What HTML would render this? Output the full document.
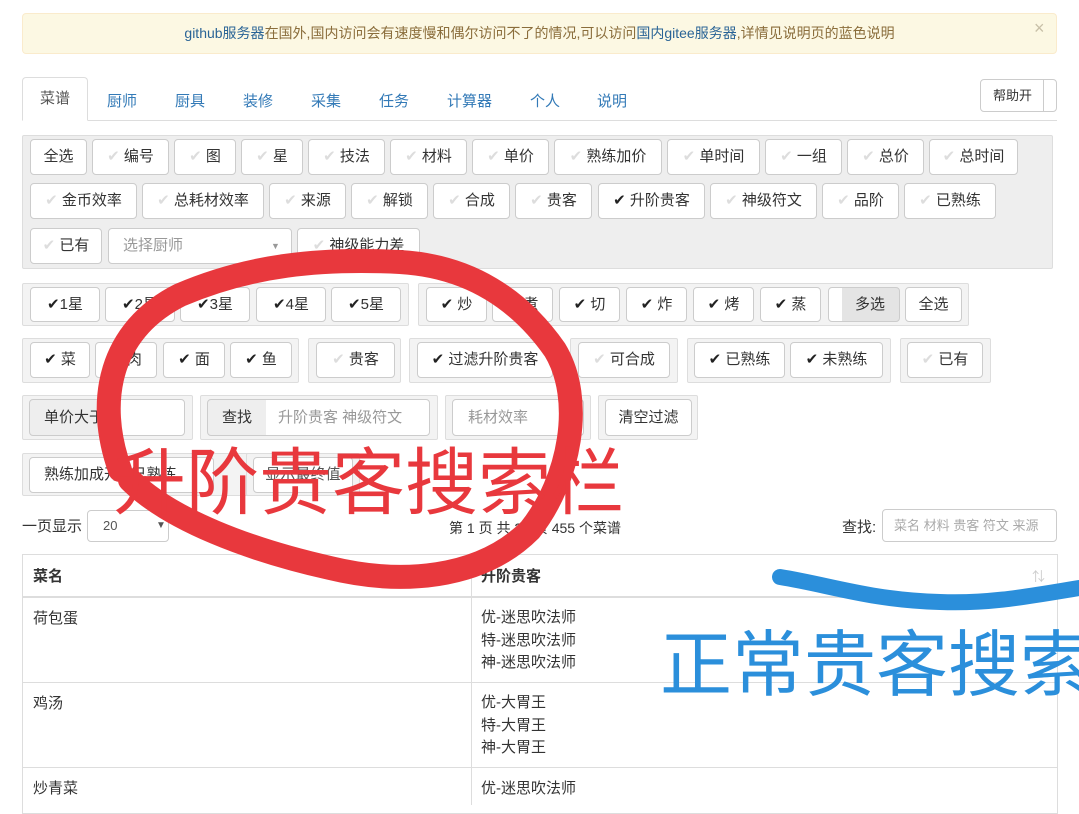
<!DOCTYPE html>
<html><head><meta charset="utf-8"><style>
*{box-sizing:border-box;margin:0;padding:0}
body{width:1079px;height:800px;overflow:hidden;background:#fff;position:relative;font-family:"Liberation Sans","Noto Sans CJK SC",sans-serif;color:#333;font-size:15px}
.a{position:absolute}
.g{position:absolute;background:#f3f3f3;border:1px solid #ddd;border-radius:2px}
.b{position:absolute;border:1px solid #ccc;border-radius:4px;background:#fff;text-align:center;font-size:15px;color:#333;white-space:nowrap}
.c{color:#222}.u{color:#ddd}
.t{position:absolute;top:90px;color:#337ab7;font-size:15px}
</style></head><body>
<div class="a" style="left:22px;top:13px;width:1035px;height:41px;background:#fcf8e3;border:1px solid #faebcc;border-radius:4px;text-align:center;line-height:39px;color:#8a6d3b;font-size:14px"><span style="color:#2a6496">github服务器</span>在国外,国内访问会有速度慢和偶尔访问不了的情况,可以访问<span style="color:#2a6496">国内gitee服务器</span>,详情见说明页的蓝色说明</div>
<div class="a" style="left:1034px;top:18px;color:#c8c0a8;font-size:18px">×</div>
<div class="a" style="left:22px;top:120px;width:1035px;height:1px;background:#ddd"></div>
<div class="a" style="left:22px;top:77px;width:66px;height:44px;background:#fff;border:1px solid #ddd;border-bottom-color:#fff;border-radius:4px 4px 0 0;text-align:center;line-height:42px;color:#555">菜谱</div>
<div class="t" style="left:107px">厨师</div><div class="t" style="left:175px">厨具</div><div class="t" style="left:243px">装修</div><div class="t" style="left:311px">采集</div><div class="t" style="left:379px">任务</div><div class="t" style="left:447px">计算器</div><div class="t" style="left:530px">个人</div><div class="t" style="left:597px">说明</div>
<div class="b" style="left:980px;top:79px;width:77px;height:33px;line-height:31px;font-size:13px;text-align:left;padding-left:12px">帮助开<span class="a" style="left:62px;top:0;width:1px;height:31px;background:#ccc"></span></div>

<div class="g" style="left:22px;top:135px;width:1031px;height:134px;background:#eee"></div>
<div class="b" style="left:30px;top:139px;width:57px;height:36px;line-height:34px">全选</div>
<div class="b" style="left:92px;top:139px;width:77px;height:36px;line-height:34px"><span class="u">✔</span> 编号</div>
<div class="b" style="left:174px;top:139px;width:62px;height:36px;line-height:34px"><span class="u">✔</span> 图</div>
<div class="b" style="left:241px;top:139px;width:62px;height:36px;line-height:34px"><span class="u">✔</span> 星</div>
<div class="b" style="left:308px;top:139px;width:77px;height:36px;line-height:34px"><span class="u">✔</span> 技法</div>
<div class="b" style="left:390px;top:139px;width:77px;height:36px;line-height:34px"><span class="u">✔</span> 材料</div>
<div class="b" style="left:472px;top:139px;width:77px;height:36px;line-height:34px"><span class="u">✔</span> 单价</div>
<div class="b" style="left:554px;top:139px;width:108px;height:36px;line-height:34px"><span class="u">✔</span> 熟练加价</div>
<div class="b" style="left:667px;top:139px;width:93px;height:36px;line-height:34px"><span class="u">✔</span> 单时间</div>
<div class="b" style="left:765px;top:139px;width:77px;height:36px;line-height:34px"><span class="u">✔</span> 一组</div>
<div class="b" style="left:847px;top:139px;width:77px;height:36px;line-height:34px"><span class="u">✔</span> 总价</div>
<div class="b" style="left:929px;top:139px;width:89px;height:36px;line-height:34px"><span class="u">✔</span> 总时间</div>
<div class="b" style="left:30px;top:183px;width:107px;height:36px;line-height:34px"><span class="u">✔</span> 金币效率</div>
<div class="b" style="left:142px;top:183px;width:122px;height:36px;line-height:34px"><span class="u">✔</span> 总耗材效率</div>
<div class="b" style="left:269px;top:183px;width:77px;height:36px;line-height:34px"><span class="u">✔</span> 来源</div>
<div class="b" style="left:351px;top:183px;width:77px;height:36px;line-height:34px"><span class="u">✔</span> 解锁</div>
<div class="b" style="left:433px;top:183px;width:77px;height:36px;line-height:34px"><span class="u">✔</span> 合成</div>
<div class="b" style="left:515px;top:183px;width:77px;height:36px;line-height:34px"><span class="u">✔</span> 贵客</div>
<div class="b" style="left:598px;top:183px;width:107px;height:36px;line-height:34px"><span class="c">✔</span> 升阶贵客</div>
<div class="b" style="left:710px;top:183px;width:107px;height:36px;line-height:34px"><span class="u">✔</span> 神级符文</div>
<div class="b" style="left:822px;top:183px;width:77px;height:36px;line-height:34px"><span class="u">✔</span> 品阶</div>
<div class="b" style="left:904px;top:183px;width:92px;height:36px;line-height:34px"><span class="u">✔</span> 已熟练</div>
<div class="b" style="left:30px;top:228px;width:72px;height:36px;line-height:34px"><span class="u">✔</span> 已有</div>
<div class="b" style="left:108px;top:228px;width:184px;height:36px;line-height:34px;text-align:left;padding-left:14px;color:#999">选择厨师<span class="a" style="left:162px;top:0;font-size:9px;color:#999">▼</span></div>
<div class="b" style="left:297px;top:228px;width:123px;height:36px;line-height:34px"><span class="u">✔</span> 神级能力差</div>

<div class="g" style="left:22px;top:283px;width:387px;height:43px"></div>
<div class="b" style="left:30px;top:287px;width:70px;height:35px;line-height:33px"><span class="c">✔</span>1星</div>
<div class="b" style="left:105px;top:287px;width:70px;height:35px;line-height:33px"><span class="c">✔</span>2星</div>
<div class="b" style="left:180px;top:287px;width:70px;height:35px;line-height:33px"><span class="c">✔</span>3星</div>
<div class="b" style="left:256px;top:287px;width:70px;height:35px;line-height:33px"><span class="c">✔</span>4星</div>
<div class="b" style="left:331px;top:287px;width:70px;height:35px;line-height:33px"><span class="c">✔</span>5星</div>
<div class="g" style="left:418px;top:283px;width:551px;height:43px"></div>
<div class="b" style="left:426px;top:287px;width:61px;height:35px;line-height:33px"><span class="c">✔</span> 炒</div>
<div class="b" style="left:492px;top:287px;width:61px;height:35px;line-height:33px"><span class="c">✔</span> 煮</div>
<div class="b" style="left:559px;top:287px;width:61px;height:35px;line-height:33px"><span class="c">✔</span> 切</div>
<div class="b" style="left:626px;top:287px;width:61px;height:35px;line-height:33px"><span class="c">✔</span> 炸</div>
<div class="b" style="left:693px;top:287px;width:61px;height:35px;line-height:33px"><span class="c">✔</span> 烤</div>
<div class="b" style="left:760px;top:287px;width:61px;height:35px;line-height:33px"><span class="c">✔</span> 蒸</div>
<div class="b" style="left:828px;top:287px;width:72px;height:35px;line-height:33px;background:linear-gradient(90deg,#fff 13px,#e4e4e4 13px);padding-left:12px">多选</div>
<div class="b" style="left:905px;top:287px;width:57px;height:35px;line-height:33px">全选</div>

<div class="g" style="left:22px;top:338px;width:277px;height:45px"></div>
<div class="b" style="left:30px;top:342px;width:60px;height:36px;line-height:34px"><span class="c">✔</span> 菜</div>
<div class="b" style="left:95px;top:342px;width:62px;height:36px;line-height:34px"><span class="c">✔</span> 肉</div>
<div class="b" style="left:163px;top:342px;width:62px;height:36px;line-height:34px"><span class="c">✔</span> 面</div>
<div class="b" style="left:230px;top:342px;width:62px;height:36px;line-height:34px"><span class="c">✔</span> 鱼</div>
<div class="g" style="left:308px;top:338px;width:93px;height:45px"></div>
<div class="b" style="left:316px;top:342px;width:79px;height:36px;line-height:34px"><span class="u">✔</span> 贵客</div>
<div class="g" style="left:409px;top:338px;width:152px;height:45px"></div>
<div class="b" style="left:417px;top:342px;width:136px;height:36px;line-height:34px"><span class="c">✔</span> 过滤升阶贵客</div>
<div class="g" style="left:570px;top:338px;width:108px;height:45px"></div>
<div class="b" style="left:578px;top:342px;width:92px;height:36px;line-height:34px"><span class="u">✔</span> 可合成</div>
<div class="g" style="left:687px;top:338px;width:204px;height:45px"></div>
<div class="b" style="left:694px;top:342px;width:91px;height:36px;line-height:34px"><span class="c">✔</span> 已熟练</div>
<div class="b" style="left:790px;top:342px;width:93px;height:36px;line-height:34px"><span class="c">✔</span> 未熟练</div>
<div class="g" style="left:900px;top:338px;width:91px;height:45px"></div>
<div class="b" style="left:907px;top:342px;width:76px;height:36px;line-height:34px"><span class="u">✔</span> 已有</div>

<div class="g" style="left:22px;top:395px;width:171px;height:45px"></div>
<div class="b" style="left:29px;top:399px;width:156px;height:37px;line-height:35px;text-align:left;padding-left:14px;background:linear-gradient(90deg,#eee 75px,#fff 75px)">单价大于</div>
<div class="g" style="left:200px;top:395px;width:238px;height:45px"></div>
<div class="b" style="left:207px;top:399px;width:223px;height:37px;line-height:35px;text-align:left;padding-left:14px;background:linear-gradient(90deg,#eee 58px,#fff 58px)">查找<span style="color:#999;margin-left:26px">升阶贵客 神级符文</span></div>
<div class="g" style="left:445px;top:395px;width:146px;height:45px"></div>
<div class="b" style="left:452px;top:399px;width:132px;height:37px;line-height:35px;text-align:left;padding-left:15px;color:#999">耗材效率</div>
<div class="g" style="left:598px;top:395px;width:100px;height:45px"></div>
<div class="b" style="left:605px;top:399px;width:87px;height:37px;line-height:35px">清空过滤</div>

<div class="g" style="left:22px;top:453px;width:228px;height:43px"></div>
<div class="b" style="left:29px;top:457px;width:185px;height:36px;line-height:34px;text-align:left;padding-left:14px">熟练加成开 &nbsp;&nbsp;已熟练</div>
<div class="g" style="left:246px;top:453px;width:114px;height:43px"></div>
<div class="b" style="left:253px;top:457px;width:100px;height:36px;line-height:34px;color:#555">显示最终值</div>

<div class="a" style="left:22px;top:515px;font-size:15px">一页显示</div>
<div class="b" style="left:87px;top:510px;width:82px;height:32px;line-height:30px;text-align:left;padding-left:15px;font-size:13px;color:#555">20<span class="a" style="left:68px;top:0;font-size:10px">▼</span></div>
<div class="a" style="left:449px;top:518px;font-size:14px">第 1 页 共 23 页 455 个菜谱</div>
<div class="a" style="left:842px;top:516px;font-size:15px">查找:</div>
<div class="b" style="left:882px;top:509px;width:175px;height:33px;line-height:31px;text-align:left;padding-left:11px;font-size:13px;color:#aaa">菜名 材料 贵客 符文 来源</div>

<div class="a" style="left:22px;top:554px;width:1036px;height:260px;border:1px solid #ddd"></div>
<div class="a" style="left:23px;top:596px;width:1034px;height:2px;background:#ddd"></div>
<div class="a" style="left:471px;top:555px;width:1px;height:250px;background:#ddd"></div>
<div class="a" style="left:23px;top:682px;width:1034px;height:1px;background:#ddd"></div>
<div class="a" style="left:23px;top:767px;width:1034px;height:1px;background:#ddd"></div>
<div class="a" style="left:33px;top:565px;font-weight:bold">菜名</div>
<div class="a" style="left:481px;top:565px;font-weight:bold">升阶贵客</div>
<div class="a" style="left:1032px;top:566px;color:#ccc;font-size:13px">⇅</div>
<div class="a" style="left:33px;top:607px">荷包蛋</div>
<div class="a" style="left:481px;top:607px;line-height:22.5px">优-迷思吹法师<br>特-迷思吹法师<br>神-迷思吹法师</div>
<div class="a" style="left:33px;top:692px">鸡汤</div>
<div class="a" style="left:481px;top:692px;line-height:22.5px">优-大胃王<br>特-大胃王<br>神-大胃王</div>
<div class="a" style="left:33px;top:777px">炒青菜</div>
<div class="a" style="left:481px;top:777px">优-迷思吹法师</div>

<svg class="a" style="left:0;top:0" width="1079" height="800">
<path d="M120,470 C95,400 110,330 180,295 C250,265 320,258 400,262 C470,266 520,300 555,350 C585,400 570,480 530,530 C480,580 400,585 330,568 C250,550 170,520 130,480" fill="none" stroke="#e8383d" stroke-width="24" stroke-linecap="round"/>
<path d="M780,577 C830,585 870,600 940,602 C990,604 1030,596 1079,588" fill="none" stroke="#2b8fdb" stroke-width="16" stroke-linecap="round"/>
</svg>
<div class="a" style="left:113px;top:436px;font-size:73px;color:#e8383d;white-space:nowrap;letter-spacing:0px;line-height:96px">升阶贵客搜索栏</div>
<div class="a" style="left:660px;top:618px;font-size:72px;color:#2b8fdb;white-space:nowrap;line-height:96px">正常贵客搜索</div>
</body></html>
